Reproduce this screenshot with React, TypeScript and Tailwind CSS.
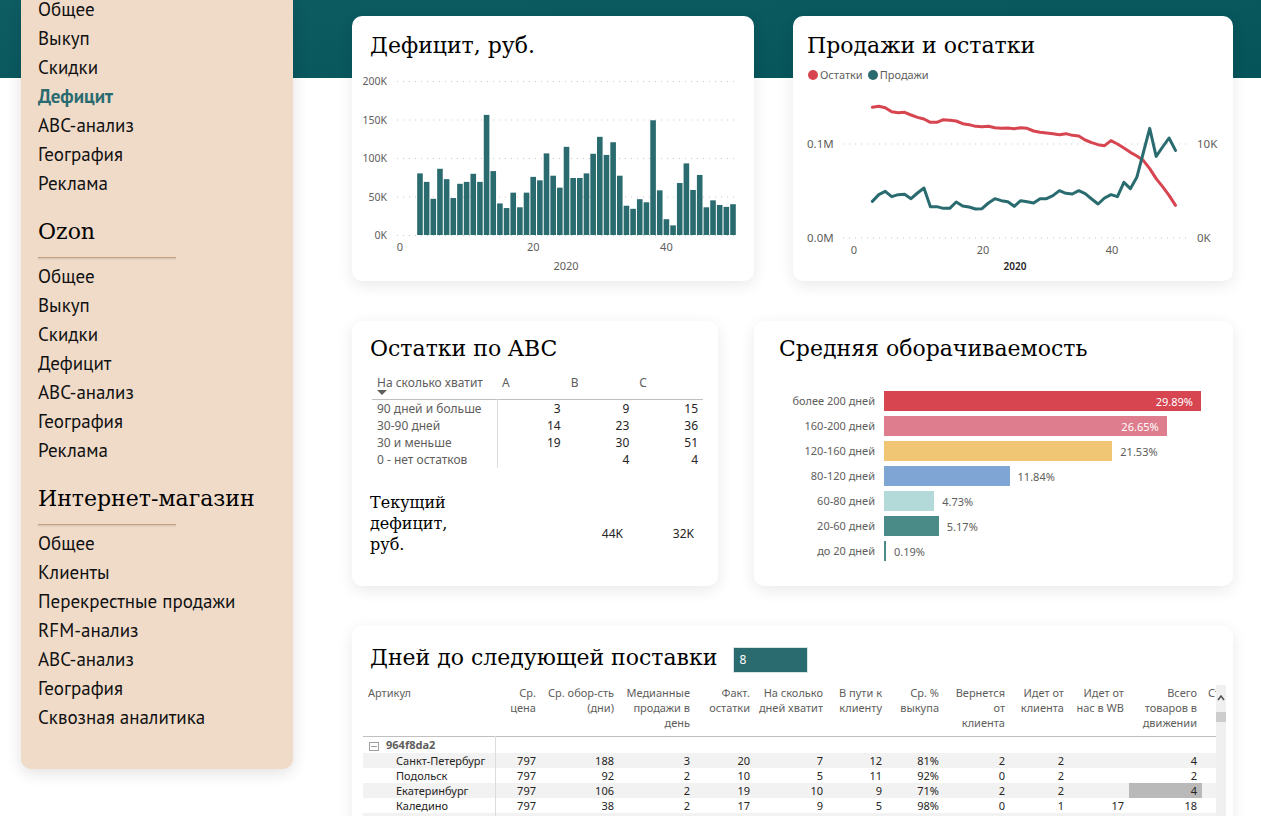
import React from "react";

const SLAB = "font-['Roboto_Slab','DejaVu_Serif',serif]";

const weeklyDeficit = [
  80, 69, 47, 86, 72.5, 48, 66.5, 69, 79.5, 69, 156, 83, 41, 35, 55, 36, 55, 75.5, 71, 106, 77, 61.5, 114.5, 74, 74, 80,
  105.5, 127.5, 104, 120.5, 77, 38, 34, 46.5, 42.5, 149, 58, 20.5, 12.5, 67.5, 93, 58.5, 78, 36, 45, 39, 36.5, 40,
];

const stockSeries = [
  392, 395, 391, 379, 376, 377, 369, 362, 357, 347, 347, 355, 353, 351, 343, 340, 335, 334, 335, 331, 329, 330, 328, 331,
  329, 321, 317, 315, 313, 310, 313, 308, 306, 294, 286, 280, 277, 292, 282, 270, 257, 246, 233, 208, 178, 154, 128, 98,
];

const salesSeries = [
  110, 130, 140, 124, 130, 131, 118, 135, 150, 94, 94, 89, 89, 108, 96, 93, 87, 88, 105, 118, 112, 109, 95, 112, 109, 105,
  118, 118, 127, 142, 134, 132, 142, 133, 117, 102, 120, 130, 124, 167, 148, 182, 255, 329, 245, 273, 300, 263,
];

const FIRST_WEEK = 3;

function Card({ className = "", children }: { className?: string; children: React.ReactNode }) {
  return (
    <section className={`min-w-0 rounded-[10px] bg-white shadow-[0_4px_16px_rgba(0,0,0,0.09)] ${className}`}>
      {children}
    </section>
  );
}

function CardTitle({ className = "", children }: { className?: string; children: React.ReactNode }) {
  return <h2 className={`${SLAB} text-[22px] leading-8 whitespace-nowrap text-black ${className}`}>{children}</h2>;
}

function NavList({ items, active }: { items: string[]; active?: string }) {
  return (
    <ul className="text-[19px] leading-[29px]">
      {items.map((item) => (
        <li key={item}>
          <a href="#" className={item === active ? "font-bold text-[#2a6b70]" : "text-[#111]"}>
            {item}
          </a>
        </li>
      ))}
    </ul>
  );
}

function NavHeading({ children }: { children: React.ReactNode }) {
  return (
    <>
      <h2 className={`${SLAB} pt-[18px] text-[22px] leading-8 whitespace-nowrap text-black`}>{children}</h2>
      <hr className="mt-[9px] mb-1 w-[138px] border-t border-[#c89f80] shadow-[0_1px_2px_rgba(0,0,0,0.2)]" />
    </>
  );
}

function Sidebar() {
  return (
    <nav
      aria-label="Отчёты"
      className="w-[272px] shrink-0 self-start rounded-b-[10px] bg-[#f0dbc9] pr-4 pb-[37px] pl-[17px] font-['PT_Sans','Noto_Sans',sans-serif] shadow-[0_4px_16px_rgba(0,0,0,0.12)]"
    >
      <div className="-mt-[5px]">
        <NavList
          items={["Общее", "Выкуп", "Скидки", "Дефицит", "ABC-анализ", "География", "Реклама"]}
          active="Дефицит"
        />
      </div>
      <NavHeading>Ozon</NavHeading>
      <NavList items={["Общее", "Выкуп", "Скидки", "Дефицит", "ABC-анализ", "География", "Реклама"]} />
      <NavHeading>Интернет-магазин</NavHeading>
      <NavList
        items={[
          "Общее",
          "Клиенты",
          "Перекрестные продажи",
          "RFM-анализ",
          "ABC-анализ",
          "География",
          "Сквозная аналитика",
        ]}
      />
    </nav>
  );
}

function GridLine({ x1, x2, y }: { x1: number; x2: number; y: number }) {
  return <line x1={x1} x2={x2} y1={y} y2={y} stroke="#c8c8c8" strokeWidth="1" strokeDasharray="1 5" />;
}

function DeficitChart() {
  const base = 169;
  const x = (week: number) => 48 + week * 6.66;
  return (
    <svg viewBox="0 0 402 215" className="block w-full" role="img" aria-label="Дефицит по неделям">
      {[0, 50, 100, 150, 200].map((v) => (
        <g key={v}>
          <GridLine x1={45} x2={385} y={base + 0.5 - v * 0.77} />
          <text x="35" y={base + 4 - v * 0.77} textAnchor="end" fontSize="10.500" fill="#605e5c">
            {v}K
          </text>
        </g>
      ))}
      {weeklyDeficit.map((v, i) => (
        <rect
          key={i}
          x={x(i + FIRST_WEEK) - 2.8}
          y={base - v * 0.77}
          width="5.6"
          height={v * 0.77}
          fill="#2a6b70"
        />
      ))}
      {[0, 20, 40].map((w) => (
        <text key={w} x={x(w)} y="185" textAnchor="middle" fontSize="11" fill="#605e5c">
          {w}
        </text>
      ))}
      <text x="214" y="204" textAnchor="middle" fontSize="11" fill="#605e5c">
        2020
      </text>
    </svg>
  );
}

function SalesChart() {
  const base = 154;
  const x = (week: number) => 60 + week * 6.45;
  const points = (series: number[]) => series.map((v, i) => `${x(i + FIRST_WEEK)},${base - v / 3}`).join(" ");
  return (
    <svg viewBox="0 0 440 197" className="block w-full" role="img" aria-label="Продажи и остатки по неделям">
      <GridLine x1={50} x2={395} y={60} />
      <GridLine x1={50} x2={395} y={154} />
      <g fontSize="11.5" fill="#605e5c">
        <text x="14" y="64">0.1M</text>
        <text x="14" y="158">0.0M</text>
        <text x="404" y="64">10K</text>
        <text x="404" y="158">0K</text>
      </g>
      <g fill="none" strokeWidth="3" strokeLinejoin="round" strokeLinecap="round">
        <polyline points={points(stockSeries)} stroke="#d64550" />
        <polyline points={points(salesSeries)} stroke="#2a6b70" />
      </g>
      {[0, 20, 40].map((w) => (
        <text key={w} x={x(w) + 1} y="170" textAnchor="middle" fontSize="11" fill="#605e5c">
          {w}
        </text>
      ))}
      <text x="222" y="186" textAnchor="middle" fontSize="10" fontWeight="600" fill="#252423">
        2020
      </text>
    </svg>
  );
}

const abcRows: [string, string, string, string][] = [
  ["90 дней и больше", "3", "9", "15"],
  ["30-90 дней", "14", "23", "36"],
  ["30 и меньше", "19", "30", "51"],
  ["0 - нет остатков", "", "4", "4"],
];

function AbcTable() {
  return (
    <table className="w-full table-fixed border-collapse text-[12px] leading-[17px] text-[#252423]">
      <colgroup>
        <col className="w-[125px]" />
        <col />
        <col />
        <col />
      </colgroup>
      <thead className="text-[#605e5c]">
        <tr className="h-[25px] border-b border-[#c0c0c0] align-top">
          <th className="pl-[5px] text-left font-normal whitespace-nowrap">
            На сколько хватит
            <svg viewBox="0 0 10 5" className="-mt-px block h-[5px] w-[10px]" aria-hidden="true">
              <path d="M0 0h10L5 5z" fill="#605e5c" />
            </svg>
          </th>
          <th className="pl-[5px] text-left font-normal">A</th>
          <th className="pl-[5px] text-left font-normal">B</th>
          <th className="pl-[5px] text-left font-normal">C</th>
        </tr>
      </thead>
      <tbody>
        {abcRows.map(([label, a, b, c]) => (
          <tr key={label}>
            <th className="border-r border-[#dcdcdc] pl-[5px] text-left font-normal whitespace-nowrap text-[#605e5c]">
              {label}
            </th>
            <td className="pr-[5px] text-right">{a}</td>
            <td className="pr-[5px] text-right">{b}</td>
            <td className="pr-[5px] text-right">{c}</td>
          </tr>
        ))}
      </tbody>
    </table>
  );
}

const turnover = [
  { label: "более 200 дней", value: 29.89, color: "bg-[#d64550]", inside: true },
  { label: "160-200 дней", value: 26.65, color: "bg-[#de7d8d]", inside: true },
  { label: "120-160 дней", value: 21.53, color: "bg-[#f0c674]", inside: false },
  { label: "80-120 дней", value: 11.84, color: "bg-[#7ea5d4]", inside: false },
  { label: "60-80 дней", value: 4.73, color: "bg-[#b3dad8]", inside: false },
  { label: "20-60 дней", value: 5.17, color: "bg-[#4a8b87]", inside: false },
  { label: "до 20 дней", value: 0.19, color: "bg-[#4a8b87]", inside: false },
];

function TurnoverChart() {
  return (
    <ul className="flex flex-col gap-[5px] pr-8 text-[11px] leading-5 text-[#605e5c]">
      {turnover.map(({ label, value, color, inside }) => (
        <li key={label} className="flex h-5 items-center">
          <span className="w-[121px] shrink-0 text-right">{label}</span>
          <div className="ml-[9px] flex h-5 min-w-0 grow items-center">
            <div
              className={`h-5 shrink-0 pt-px text-right text-white ${color}`}
              style={{ width: `${(value / 29.89) * 100}%` }}
            >
              {inside && <span className="pr-2">{value}%</span>}
            </div>
            {!inside && <span className="ml-2 pt-[2px]">{value}%</span>}
          </div>
        </li>
      ))}
    </ul>
  );
}

const columns: string[][] = [
  ["Ср.", "цена"],
  ["Ср. обор-сть", "(дни)"],
  ["Медианные", "продажи в", "день"],
  ["Факт.", "остатки"],
  ["На сколько", "дней хватит"],
  ["В пути к", "клиенту"],
  ["Ср. %", "выкупа"],
  ["Вернется", "от", "клиента"],
  ["Идет от", "клиента"],
  ["Идет от", "нас в WB"],
  ["Всего", "товаров в", "движении"],
];

const rows: string[][] = [
  ["Санкт-Петербург", "797", "188", "3", "20", "7", "12", "81%", "2", "2", "", "4"],
  ["Подольск", "797", "92", "2", "10", "5", "11", "92%", "0", "2", "", "2"],
  ["Екатеринбург", "797", "106", "2", "19", "10", "9", "71%", "2", "2", "", "4"],
  ["Каледино", "797", "38", "2", "17", "9", "5", "98%", "0", "1", "17", "18"],
];

function SupplyTable() {
  return (
    <table className="w-full table-fixed border-collapse text-[11px] leading-[15px] text-[#252423]">
      <colgroup>
        <col className="w-[132px]" />
        <col className="w-[46px]" />
        <col className="w-[78px]" />
        <col className="w-[76px]" />
        <col className="w-[60px]" />
        <col className="w-[73px]" />
        <col className="w-[59px]" />
        <col className="w-[57px]" />
        <col className="w-[66px]" />
        <col className="w-[59px]" />
        <col className="w-[60px]" />
        <col className="w-[73px]" />
        <col />
      </colgroup>
      <thead className="text-[#605e5c]">
        <tr className="h-[52px] border-b border-[#c0c0c0] align-top whitespace-nowrap">
          <th className="pl-[5px] text-left font-normal">Артикул</th>
          {columns.map((lines) => (
            <th key={lines.join(" ")} className="pr-[5px] font-normal">
              <div className="flex flex-col items-end">
                {lines.map((line) => (
                  <span key={line}>{line}</span>
                ))}
              </div>
            </th>
          ))}
          <th className="overflow-hidden pl-[6px] text-left font-normal">Ст</th>
        </tr>
      </thead>
      <tbody>
        <tr className="h-4">
          <th className="border-r border-[#dcdcdc] pl-[6px] text-left font-bold text-[#605e5c]">
            <div className="flex items-center gap-[7px]">
              <button type="button" aria-label="Свернуть" className="mt-[3px] block">
                <svg viewBox="0 0 10 9" className="block h-[9px] w-[10px]" fill="none" stroke="#a19f9d">
                  <path d="M.5 0v9M9.5 0v9M0 .5h10M0 8.5h10M2 4.5h6" />
                </svg>
              </button>
              964f8da2
            </div>
          </th>
          <td colSpan={12} />
        </tr>
        {rows.map(([city, ...values], r) => (
          <tr key={city} className="odd:bg-white even:bg-[#f2f2f2]">
            <th className="border-r border-[#dcdcdc] pl-[33px] text-left font-normal whitespace-nowrap">{city}</th>
            {values.map((value, c) => (
              <td key={c} className={r === 2 && c === 10 ? "bg-[#b9b9b9] pr-[5px] text-right" : "pr-[5px] text-right"}>
                {value}
              </td>
            ))}
            <td />
          </tr>
        ))}
        <tr className="h-[15px] bg-[#f2f2f2]">
          <th className="border-r border-[#dcdcdc]" />
          <td colSpan={12} />
        </tr>
      </tbody>
    </table>
  );
}

export default function App() {
  return (
    <div className="flex h-screen overflow-hidden bg-white bg-[linear-gradient(175deg,#0e5d63,#04545a)] bg-[length:100%_78px] bg-no-repeat pr-7 pl-[21px] font-['Segoe_UI','Noto_Sans',sans-serif]">
      <Sidebar />
      <main className="ml-[59px] flex min-w-0 grow flex-col gap-10 pt-4">
        <div className="grid shrink-0 grid-cols-[402fr_440fr] gap-[39px]">
          <Card className="pt-[14px]">
            <CardTitle className="pl-[18px]">Дефицит, руб.</CardTitle>
            <div className="mt-1">
              <DeficitChart />
            </div>
          </Card>
          <Card className="pt-[14px]">
            <CardTitle className="pl-[14px]">Продажи и остатки</CardTitle>
            <ul className="mt-1 flex h-[18px] items-center gap-[5px] pl-[15px] text-[11px] text-[#605e5c]">
              <li className="flex items-center gap-[2px]">
                <span className="size-[10px] rounded-full bg-[#d64550]" />
                Остатки
              </li>
              <li className="flex items-center gap-[2px]">
                <span className="size-[10px] rounded-full bg-[#2a6b70]" />
                Продажи
              </li>
            </ul>
            <SalesChart />
          </Card>
        </div>

        <div className="grid shrink-0 grid-cols-[366fr_479fr] gap-9">
          <Card className="pt-3 pb-[31px]">
            <CardTitle className="pl-[18px]">Остатки по ABC</CardTitle>
            <div className="mt-[9px] pr-[15px] pl-5">
              <AbcTable />
            </div>
            <div className="mt-6 flex items-center pr-6 pl-[18px]">
              <h3 className={`${SLAB} w-[100px] text-[16px] leading-[21px] text-black`}>Текущий дефицит, руб.</h3>
              <div className="mt-[22px] flex grow justify-end text-[12px] text-[#252423]">
                <span>44K</span>
                <span className="w-[71px] text-right">32K</span>
              </div>
            </div>
          </Card>
          <Card className="pt-3">
            <CardTitle className="pl-[25px]">Средняя оборачиваемость</CardTitle>
            <div className="mt-[26px]">
              <TurnoverChart />
            </div>
          </Card>
        </div>

        <Card className="shrink-0 pt-4">
          <div className="flex items-center gap-4 pl-[18px]">
            <CardTitle>
              <label htmlFor="days">Дней до следующей поставки</label>
            </CardTitle>
            <input
              id="days"
              defaultValue="8"
              className="mt-1 h-[26px] w-[75px] border border-[#d5e4e5] bg-[#2a6b70] px-[5px] text-[12px] text-white"
            />
          </div>
          <div className="mt-[11px] flex pr-[7px] pl-[11px]">
            <div className="min-w-0 grow overflow-hidden">
              <SupplyTable />
            </div>
            <div className="flex w-[10px] shrink-0 flex-col bg-[#f0f0f0]">
              <button type="button" aria-label="Прокрутить вверх" className="flex h-[27px] w-full items-center justify-center">
                <svg viewBox="0 0 8 6" className="h-[6px] w-2" fill="none" stroke="#505050" strokeWidth="1.5">
                  <path d="M1 5l3-4 3 4" />
                </svg>
              </button>
              <div className="h-[10px] bg-[#cdcdcd]" />
            </div>
          </div>
        </Card>
      </main>
    </div>
  );
}
